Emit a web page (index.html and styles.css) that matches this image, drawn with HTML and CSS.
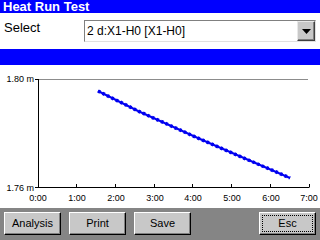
FILE: index.html
```html
<!DOCTYPE html>
<html>
<head>
<meta charset="utf-8">
<link rel="stylesheet" href="styles.css">
</head>
<body>
<div class="screen">
  <div class="titlebar">Heat Run Test</div>
  <div class="select-row">
    <div class="label">Select</div>
    <div class="combo">
      <div class="combo-text">2 d:X1-H0 [X1-H0]</div>
      <div class="combo-btn"><svg width="9" height="5" viewBox="0 0 9 5"><path d="M0 0H9L4.5 5Z" fill="#000"/></svg></div>
    </div>
  </div>
  <div class="bluebar"></div>
  <div class="chart">
    <svg class="plot" width="320" height="143" viewBox="0 0 320 143">
      <line x1="38" y1="14.5" x2="308" y2="14.5" stroke="#8c8c8c" stroke-width="1"/>
      <line x1="38.5" y1="14" x2="38.5" y2="123" stroke="#000" stroke-width="1"/>
      <line x1="35" y1="14.5" x2="38" y2="14.5" stroke="#000" stroke-width="1"/>
      <line x1="35" y1="122.5" x2="309.5" y2="122.5" stroke="#000" stroke-width="1"/>
      <g stroke="#000" stroke-width="1">
        <line x1="76.5" y1="119" x2="76.5" y2="122"/>
        <line x1="115.5" y1="119" x2="115.5" y2="122"/>
        <line x1="154.5" y1="119" x2="154.5" y2="122"/>
        <line x1="192.5" y1="119" x2="192.5" y2="122"/>
        <line x1="231.5" y1="119" x2="231.5" y2="122"/>
        <line x1="270.5" y1="119" x2="270.5" y2="122"/>
        <line x1="309.5" y1="119" x2="309.5" y2="122"/>
      </g>
      <g class="ylab">
        <text x="34" y="17" text-anchor="end">1.80 m</text>
        <text x="34" y="126" text-anchor="end">1.76 m</text>
      </g>
      <g class="xlab" text-anchor="middle">
        <text x="38" y="136">0:00</text>
        <text x="77" y="136">1:00</text>
        <text x="116" y="136">2:00</text>
        <text x="155" y="136">3:00</text>
        <text x="193" y="136">4:00</text>
        <text x="232" y="136">5:00</text>
        <text x="271" y="136">6:00</text>
        <text x="309" y="136">7:00</text>
      </g>
      <polyline points="98,26 138,46 200,74 290,113" fill="none" stroke="#0000f0" stroke-width="2"/>
      <polyline points="98,26 138,46 200,74 290,113" fill="none" stroke="#0000f0" stroke-width="3.5" stroke-dasharray="2.5 2.5"/>
    </svg>
  </div>
  <div class="toolbar">
    <div class="btn">Analysis</div>
    <div class="btn">Print</div>
    <div class="btn">Save</div>
    <div class="btn btn-esc"><span class="focus">Esc</span></div>
  </div>
</div>
</body>
</html>
```
FILE: styles.css
```css
html, body {
  margin: 0;
  padding: 0;
  background: #fff;
}
.screen {
  width: 320px;
  height: 240px;
  display: flex;
  flex-direction: column;
  font-family: "Liberation Sans", Arial, sans-serif;
  overflow: hidden;
}
.titlebar {
  height: 13px;
  line-height: 14px;
  background: #0000ff;
  color: #fff;
  font-weight: bold;
  font-size: 13px;
  padding-left: 3px;
}
.select-row {
  height: 36px;
  box-sizing: border-box;
  display: flex;
  align-items: flex-start;
  padding: 7px 4px 0 4px;
}
.label {
  width: 80px;
  font-size: 13px;
  line-height: 16px;
  color: #000;
}
.combo {
  flex: 1;
  height: 22px;
  box-sizing: border-box;
  border: 1px solid;
  border-color: #808080 #e0e0e0 #e0e0e0 #808080;
  display: flex;
  align-items: stretch;
}
.combo-text {
  flex: 1;
  font-size: 12px;
  line-height: 20px;
  padding-left: 2px;
}
.combo-btn {
  width: 18px;
  box-sizing: border-box;
  background: #c8c8c8;
  border: 1px solid;
  border-color: #e8e8e8 #404040 #404040 #e8e8e8;
  box-shadow: inset -1px -1px 0 #808080;
  display: flex;
  align-items: center;
  justify-content: center;
}
.combo-btn svg {
  display: block;
}
.bluebar {
  height: 16px;
  background: #0000ff;
}
.chart {
  height: 143px;
  background: #fff;
}
.plot {
  display: block;
}
.ylab, .xlab {
  font-family: "Liberation Sans", Arial, sans-serif;
  font-size: 9px;
  fill: #000;
}
.toolbar {
  flex: 1;
  background: #858585;
  display: flex;
  align-items: flex-start;
  gap: 8px;
  padding: 4px 4px 0 4px;
}
.btn {
  width: 57px;
  height: 23px;
  box-sizing: border-box;
  background: #c8c8c8;
  border: 1px solid;
  border-color: #fff #000 #000 #fff;
  box-shadow: inset -1px -1px 0 #808080;
  font-size: 11px;
  line-height: 21px;
  text-align: center;
  color: #000;
}
.btn-esc {
  margin-left: auto;
  padding: 2px;
  line-height: 17px;
}
.focus {
  display: block;
  height: 17px;
  box-sizing: border-box;
  border: 1px dotted #000;
  line-height: 15px;
}
```
